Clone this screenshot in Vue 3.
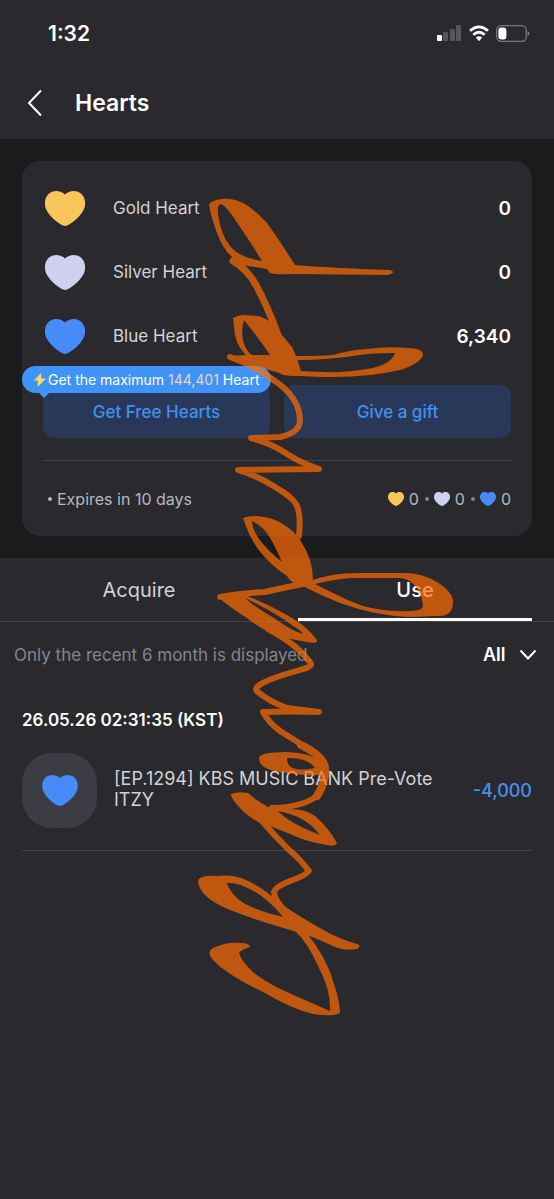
<template>
  <div class="app">
    <header class="top">
      <div class="status">
        <span class="time">1:32</span>
        <div class="indicators">
          <svg width="25" height="17" viewBox="0 0 25 17" aria-hidden="true">
            <rect x="0" y="10" width="5" height="6" rx="1" fill="#fff" />
            <rect x="6" y="7" width="5" height="9" rx="1" fill="#56565b" />
            <rect x="13" y="4" width="5" height="12" rx="1" fill="#56565b" />
            <rect x="19" y="0" width="5" height="16" rx="1" fill="#56565b" />
          </svg>
          <svg width="20" height="17" viewBox="0 0 20 17" aria-hidden="true">
            <g fill="none" stroke="#fff" stroke-width="2.8">
              <path d="M1 5.8Q10-2 19 5.8" />
              <path d="M4.3 9.7q5.7-4.8 11.4 0" />
            </g>
            <path d="M6.8 12.4q3.2-2.3 6.4 0L10 16.3z" fill="#fff" />
          </svg>
          <svg width="34" height="17" viewBox="0 0 34 17" aria-hidden="true">
            <rect x=".7" y=".7" width="29.6" height="15.6" rx="4.5" fill="none" stroke="#77777c" stroke-width="1.3" />
            <rect x="2.4" y="2.4" width="8" height="12.2" rx="3" fill="#fff" />
            <path d="M31.5 6v5q2-.6 2-2.5t-2-2.5z" fill="#77777c" />
          </svg>
        </div>
      </div>
      <div class="nav">
        <button class="back" type="button" aria-label="Back">
          <svg width="16" height="28" viewBox="0 0 16 28"><path d="M14 1.5 2 14l12 12.5" /></svg>
        </button>
        <h1>Hearts</h1>
      </div>
    </header>

    <section class="band">
      <div class="card">
        <ul class="balances">
          <li v-for="h in hearts" :key="h.name">
            <svg class="heart" :class="h.kind" viewBox="0 0 40 35" aria-hidden="true"><path :d="heartPath" /></svg>
            <span class="name">{{ h.name }} Heart</span>
            <strong>{{ h.amount }}</strong>
          </li>
        </ul>
        <div class="actions">
          <button type="button">Get Free Hearts</button>
          <button type="button">Give a gift</button>
          <div class="tip">
            <svg width="12" height="14" viewBox="0 0 12 14" aria-hidden="true">
              <path d="M7 0 0 7.5h4L3.5 14 12 5.500H7.500z" fill="#ffd66b" />
            </svg>
            <span>Get the maximum <em>144,401</em> Heart</span>
          </div>
        </div>
        <div class="expiry">
          <span class="label">Expires in 10 days</span>
          <ul>
            <li v-for="h in hearts" :key="h.name">
              <svg class="heart" :class="h.kind" viewBox="0 0 40 35" aria-hidden="true"><path :d="heartPath" /></svg>
              {{ h.expiring }}
            </li>
          </ul>
        </div>
      </div>
    </section>

    <nav class="tabs">
      <button type="button" v-for="t in tabs" :key="t" :class="{ active: t === tab }" @click="tab = t">{{ t }}</button>
    </nav>

    <div class="filter">
      <p>Only the recent 6 month is displayed.</p>
      <div class="picker">
        <select v-model="range" aria-label="Filter">
          <option>All</option>
        </select>
        <svg width="18" height="12" viewBox="0 0 18 12" aria-hidden="true"><path d="m1.500 1.500 7.500 8 7.500-8" /></svg>
      </div>
    </div>

    <section class="history">
      <h2>26.05.26 02:31:35 (KST)</h2>
      <article>
        <div class="badge">
          <svg class="heart blue" viewBox="0 0 40 35" aria-hidden="true"><path :d="heartPath" /></svg>
        </div>
        <p>[EP.1294] KBS MUSIC BANK Pre-Vote<br>ITZY</p>
        <span class="delta">-4,000</span>
      </article>
    </section>

    <!-- freehand ink over the whole screen -->
    <svg class="ink" width="260" height="830" viewBox="197 192 260 830" aria-hidden="true">
      <g class="ink-fill">
        <path d="M210 203Q218 198 230 199Q246 200 267 223Q276 235 295 265Q330 268 390 270Q397 272 388 275L295 274Q276 275 270 273L267 269L243 265L230 262Q231 258 235 259Q224 252 217 233Q211 217 209 205ZM221 204Q217 204 218 214Q221 235 230 246Q240 258 262 261Q251 243 242 230Q226 205 221 204Z" />
        <path d="M233 318Q238 315 243 315L258 316Q267 318 274 326Q284 337 292 347Q298 358 301 374L298 376Q289 376 283 375Q277 372 272 367Q259 362 250 358Q238 350 235 335ZM244 320Q241 328 243 341Q246 351 252 355L270 355Q260 340 244 320Z" />
        <path d="M228 357Q230 355 250 355L297 356Q319 356 333 355Q350 350 367 349Q388 346 407 348Q423 348 423 355Q420 364 400 370Q370 377 333 377Q310 377 290 375Q267 371 250 363ZM297 360Q330 360 367 354Q382 353 395 353Q391 365 367 369Q340 374 301 371ZM259 359 272 364 267 359Z" />
        <path d="M243 518Q248 516 257 516Q272 517 283 524Q297 533 302 543Q313 560 313 580L303 586Q292 585 287 576Q272 566 262 554Q251 542 243 518ZM252 521Q252 529 259 539Q269 552 282 562Q276 548 270 538Q264 527 252 521Z" />
        <path d="M300 583 313 580Q333 573 357 573L400 573Q421 572 437 582Q453 592 453 602Q453 617 437 616L410 617Q376 616 340 603Q322 596 303 586ZM315 584Q333 593 333 593Q348 601 363 606Q382 611 400 611Q423 612 423 606Q422 596 417 588Q409 578 400 578L352 578Q335 579 315 584Z" />
        <path d="M217 596Q236 592 247 596Q268 604 287 615Q307 626 317 640Q318 644 307 642Q292 640 277 635Q260 629 247 618Q229 607 217 596ZM245 598Q256 608 274 618Q292 631 303 634Q303 632 293 626Q278 614 245 598Z" />
        <path d="M259 758Q260 752 287 752Q312 753 320 762L325 772Q317 777 307 775Q291 774 280 772Q259 769 259 758ZM287 758Q287 766 293 768Q300 771 315 768Q307 757 287 758Z" />
        <path d="M231 794Q238 791 248 793Q257 801 270 808Q281 805 290 809Q306 809 315 816Q328 827 337 843Q335 847 327 845Q307 842 290 834Q270 826 258 822Q246 815 240 808Q231 799 231 794ZM278 811Q289 823 320 835Q306 816 278 811Z" />
        <path d="M198 880Q202 875 217 876Q234 874 246 880Q265 889 278 902Q300 917 327 932Q340 939 357 944Q362 946 357 949Q344 951 335 947Q320 940 307 935L297 932Q261 922 238 913Q198 899 198 880ZM227 883Q229 890 236 897Q246 908 283 917Q271 902 257 893Q239 882 227 883ZM287 909Q292 918 297 922L305 924Q297 915 287 909Z" />
        <path d="M340 1013Q333 1017 313 1014Q292 1009 265 993Q227 975 213 960Q206 952 213 948Q226 942 240 943Q250 943 250 947Q241 950 239 953Q242 962 253 972Q267 984 298 997L330 1011Q331 990 318 966Q308 943 295 931L305 931Q327 957 334 984Q340 1002 340 1013Z" />
      </g>
      <g class="ink-line">
        <path d="M233 261Q247 269 256 285Q267 305 278 335" stroke-width="7" />
        <path d="M230 357Q253 365 272 379C291 391 300 406 300 421Q299 433 280 437L251 438Q273 444 287 454Q301 463 319 469L238 470Q258 476 275 487C297 500 302 505 299 536" />
        <path d="M303 584Q282 588 265 592Q242 593 220 597" />
        <path d="M268 629Q283 637 293 645Q301 651 309 661Q315 666 303 669L283 675Q249 686 258 692Q270 702 287 708L319 712Q290 711 263 712Q268 722 280 731L304 746Q327 758 326 770Q325 786 319 794Q306 807 272 808" />
        <path d="M260 819Q274 835 288 849Q300 859 309 871Q303 877 290 881Q275 887 274 892Q275 902 286 911L305 924" />
        <path d="M301 745Q324 756 325 769Q325 784 317 796" stroke-width="8" />
      </g>
    </svg>
  </div>
</template>

<script setup>
import { ref } from 'vue'

const heartPath = 'M20 3.500C24-.5 32-1.500 36.500 3C41 7.500 41 15 38 20C34 27 26 33 22 34.500Q20 35.300 18 34.500C14 33 6 27 2 20C-1 15-1 7.500 3.500 3C8-1.500 16-.5 20 3.500Z'

const hearts = [
  { name: 'Gold', kind: 'gold', amount: '0', expiring: 0 },
  { name: 'Silver', kind: 'silver', amount: '0', expiring: 0 },
  { name: 'Blue', kind: 'blue', amount: '6,340', expiring: 0 },
]
const tabs = ['Acquire', 'Use']
const tab = ref('Use')
const range = ref('All')
</script>

<style>
body {
  margin: 0;
  background: #2a292d;
}
</style>

<style scoped>
.app {
  position: relative;
  min-height: 100vh;
  background: #2a292d;
  color: #d2d2d6;
  font-family: Inter, 'Liberation Sans', sans-serif;
  font-size: 17px;
  overflow: hidden;
}

h1, h2, p, ul {
  margin: 0;
  padding: 0;
  font-weight: inherit;
  list-style: none;
}

button, select {
  padding: 0;
  border: none;
  background: none;
  color: inherit;
  font: inherit;
}

.status {
  display: flex;
  align-items: center;
  justify-content: space-between;
  height: 66px;
  padding: 0 24px 0 48px;
}

.time {
  color: #fff;
  font-size: 21px;
  font-weight: 600;
}

.indicators {
  display: flex;
  align-items: center;
  gap: 7px;
}

.nav {
  display: flex;
  align-items: center;
  gap: 32px;
  height: 73px;
  padding: 0 27px;
}

.back {
  display: flex;
}

.back path, .picker path {
  fill: none;
  stroke: #fff;
  stroke-width: 2;
}

h1 {
  color: #fff;
  font-size: 23px;
  font-weight: 600;
}

.band {
  padding: 22px;
  background: #1a1b1d;
}

.card {
  padding: 15px 21px 0;
  border-radius: 18px;
  background: #2a292d;
}

.balances li {
  display: flex;
  align-items: center;
  height: 64px;
}

.heart {
  width: 40px;
  height: 35px;
}

.gold {
  fill: #f8c55a;
}

.silver {
  fill: #cdd0ee;
}

.blue {
  fill: #478bfb;
}

.balances .heart {
  margin: 0 28px 0 2px;
}

.balances strong {
  margin-left: auto;
  color: #fff;
  font-size: 19px;
  font-weight: 600;
}

.actions {
  position: relative;
  display: flex;
  gap: 14px;
  padding: 17px 0 22px;
  border-bottom: 1px solid #434347;
}

.actions button {
  flex: 1;
  height: 53px;
  border-radius: 10px;
  background: #293859;
  color: #4090f0;
  font-weight: 500;
}

.tip {
  position: absolute;
  top: -2px;
  left: -21px;
  display: flex;
  align-items: center;
  gap: 2px;
  height: 27px;
  padding: 0 12px;
  border-radius: 14px;
  background: #4094f7;
  color: #fff;
  font-size: 14px;
  white-space: nowrap;
}

.tip::after {
  content: '';
  position: absolute;
  top: 100%;
  left: 17px;
  border: 5px solid transparent;
  border-top-color: #4094f7;
  border-bottom: none;
}

.tip em {
  color: #e8d5bc;
  font-style: normal;
}

.expiry {
  display: flex;
  align-items: center;
  justify-content: space-between;
  height: 75px;
  color: #b8b8bd;
  font-size: 16px;
}

.label {
  display: flex;
  align-items: center;
  gap: 5px;
}

.label::before {
  content: '';
  width: 4px;
  height: 4px;
  margin-left: 5px;
  border-radius: 50%;
  background: #b8b8bd;
}

.expiry ul {
  display: flex;
}

.expiry li {
  display: flex;
  align-items: center;
  gap: 5px;
}

.expiry li + li::before {
  content: '';
  width: 4px;
  height: 4px;
  margin-left: 6px;
  border-radius: 50%;
  background: #85858a;
}

.expiry .heart {
  width: 16px;
  height: 14px;
}

.tabs {
  display: flex;
  gap: 42px;
  height: 63px;
  padding: 0 22px;
  border-bottom: 1px solid #434347;
}

.tabs button {
  flex: 1;
  border-top: 3px solid transparent;
  border-bottom: 3px solid transparent;
  font-size: 20px;
}

.tabs .active {
  border-bottom-color: #fff;
  color: #fff;
  font-weight: 500;
}

.filter {
  display: flex;
  align-items: center;
  justify-content: space-between;
  height: 65px;
  padding: 0 17px 0 14px;
  color: #85858c;
}

.picker {
  position: relative;
  display: flex;
  align-items: center;
}

.picker select {
  width: 54px;
  appearance: none;
  color: #fff;
  font-size: 18px;
  font-weight: 600;
}

.picker svg {
  position: absolute;
  right: 0;
  pointer-events: none;
}

.history {
  padding: 22px 22px 0;
}

h2 {
  color: #fff;
  font-size: 17px;
  font-weight: 600;
  line-height: 22px;
}

article {
  display: flex;
  align-items: center;
  gap: 17px;
  padding: 22px 0;
  border-bottom: 1px solid #434347;
}

.badge {
  display: flex;
  align-items: center;
  justify-content: center;
  width: 75px;
  height: 75px;
  border-radius: 30px;
  background: #3c3c44;
}

.badge .heart {
  height: 31px;
}

article p {
  flex: 1;
  padding-bottom: 4px;
  font-size: 18px;
  line-height: 21px;
}

.delta {
  color: #478fee;
  font-size: 18px;
  font-weight: 500;
}

.ink {
  position: absolute;
  top: 192px;
  left: 197px;
  opacity: 0.7;
  pointer-events: none;
}

.ink-fill {
  fill: #ff6b03;
  fill-rule: evenodd;
}

.ink-line {
  fill: none;
  stroke: #ff6b03;
  stroke-width: 6;
  stroke-linecap: round;
  stroke-linejoin: round;
}
</style>
